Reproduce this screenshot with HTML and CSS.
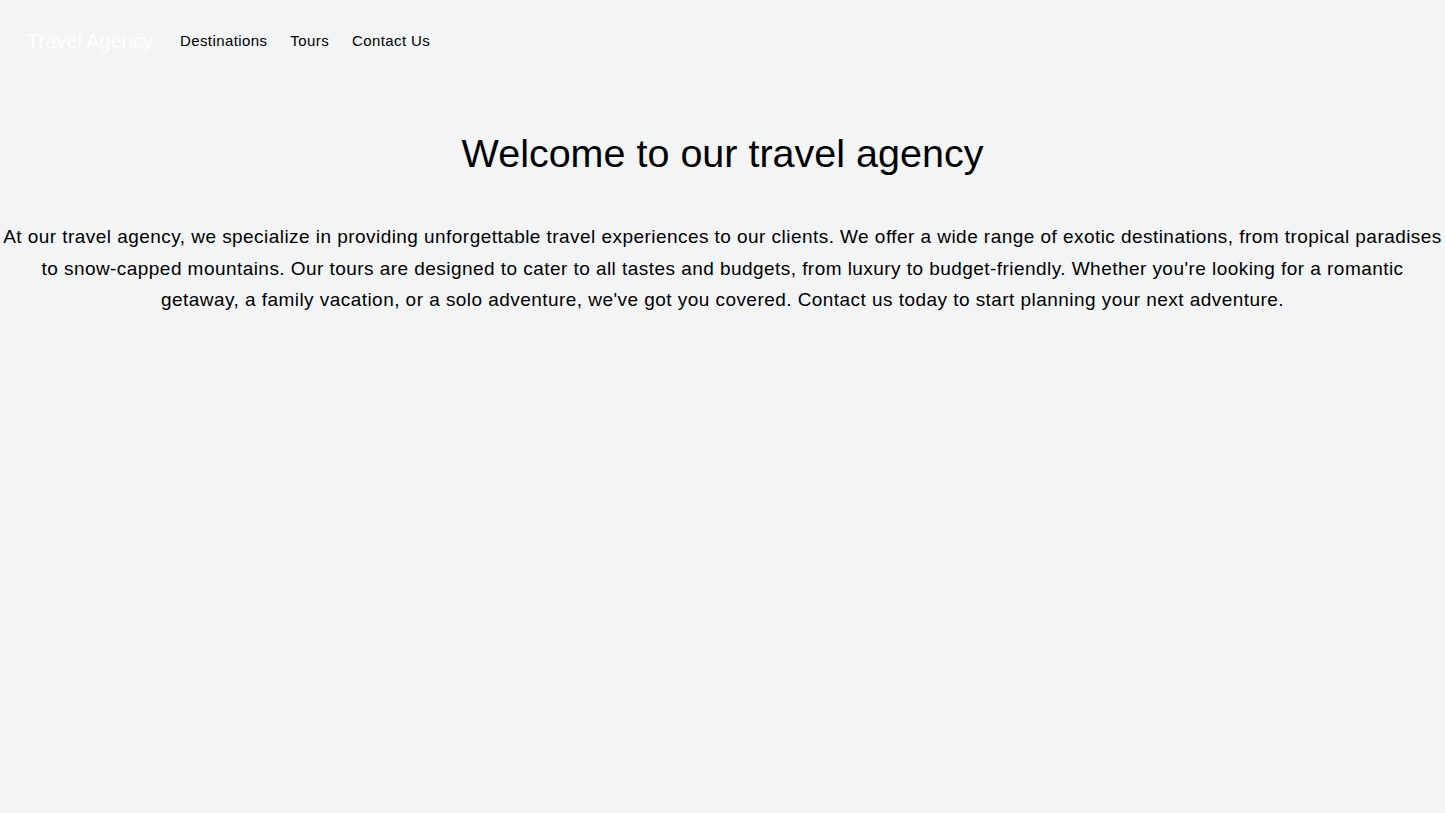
FILE: index.html
```html
<!DOCTYPE html>
<html lang="en">

<head>
    <meta charset="UTF-8">
    <meta name="viewport" content="width=device-width, initial-scale=1.0">
    <title>Travel Agency</title>
    <link rel="stylesheet" href="styles.css">
</head>

<body>
    <nav class="navbar">
        <a href="#" class="brand">Travel Agency</a>
        <ul class="nav-links">
            <li><a href="#">Destinations</a></li>
            <li><a href="#">Tours</a></li>
            <li><a href="#">Contact Us</a></li>
        </ul>
    </nav>

    <main class="hero">
        <h1>Welcome to our travel agency</h1>
        <p>At our travel agency, we specialize in providing unforgettable travel experiences to our clients. We offer a wide range of exotic destinations, from tropical paradises to snow-capped mountains. Our tours are designed to cater to all tastes and budgets, from luxury to budget-friendly. Whether you're looking for a romantic getaway, a family vacation, or a solo adventure, we've got you covered. Contact us today to start planning your next adventure.</p>
    </main>
</body>

</html>
```

FILE: styles.css
```css
html,
body {
    margin: 0;
    padding: 0;
}

body {
    font-family: "Liberation Sans", Arial, sans-serif;
    background-color: #f3f4f6;
    color: #000;
    min-height: 813px;
}

.navbar {
    display: flex;
    align-items: center;
    padding: 27px;
}

.brand {
    color: #fff;
    font-size: 20px;
    line-height: 28px;
    text-decoration: none;
    margin-right: 27px;
}

.nav-links {
    display: flex;
    gap: 23px;
    list-style: none;
    margin: 0;
    padding: 0;
}

.nav-links a {
    color: #000;
    font-size: 15px;
    letter-spacing: 0.4px;
    line-height: 20px;
    text-decoration: none;
}

.hero {
    text-align: center;
    padding-top: 47px;
}

.hero h1 {
    font-size: 39.5px;
    font-weight: normal;
    line-height: 48px;
    margin: 0 0 44px;
}

.hero p {
    font-size: 19px;
    letter-spacing: 0.45px;
    line-height: 31.5px;
    margin: 0;
}
```
